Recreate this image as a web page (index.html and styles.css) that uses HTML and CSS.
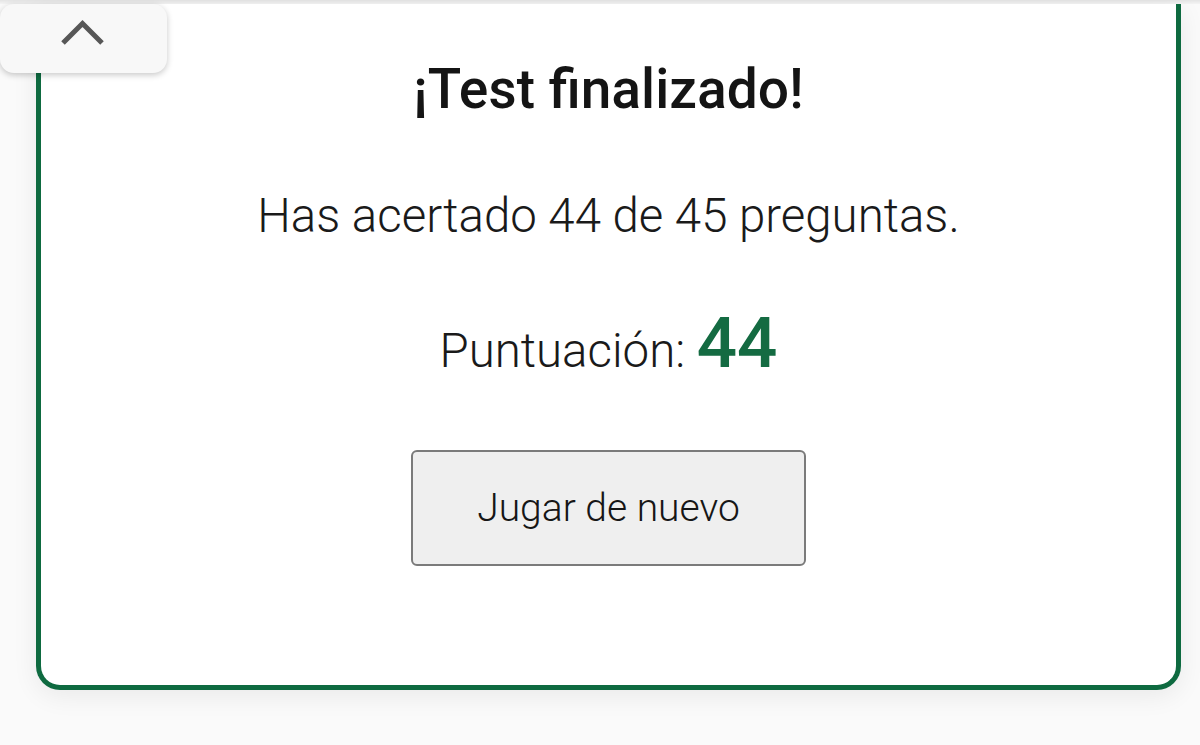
FILE: index.html
```html
<!DOCTYPE html>
<html lang="es">
<head>
<meta charset="utf-8">
<title>Test finalizado</title>
<link rel="stylesheet" href="styles.css">
</head>
<body>
<div class="topbar"></div>
<main class="page">
  <section class="card">
    <h1 class="title">¡Test finalizado!</h1>
    <p class="summary">Has acertado 44 de 45 preguntas.</p>
    <div class="score">
      <span class="score-label">Puntuación:&nbsp;</span>
      <span class="score-value">44</span>
    </div>
    <button class="again" type="button">Jugar de nuevo</button>
  </section>
</main>
<button class="collapse-tab" type="button" aria-label="Contraer">
  <svg width="46" height="28" viewBox="0 0 46 28" class="chevron">
    <polyline points="3,24 22.5,4.5 42,24" fill="none" stroke="#575757" stroke-width="5" stroke-linecap="butt" stroke-linejoin="miter"/>
  </svg>
</button>
</body>
</html>
```

FILE: styles.css
```css
* {
  box-sizing: border-box;
}

html, body {
  margin: 0;
  padding: 0;
}

body {
  background: #fafafa;
  font-family: Roboto, "Liberation Sans", Arial, sans-serif;
  color: #161616;
  width: 1200px;
  height: 745px;
  overflow: hidden;
  position: relative;
}

.topbar {
  height: 4px;
  background: linear-gradient(#e4e4e4, #f4f4f4);
}

.page {
  display: flex;
  padding-left: 36px;
}

.card {
  width: 1145px;
  background: #ffffff;
  border: 5px solid #0e6a40;
  border-top: none;
  border-radius: 0 0 24px 24px;
  box-shadow: 0 6px 26px rgba(0, 0, 0, 0.07);
  display: flex;
  flex-direction: column;
  align-items: center;
  padding: 53px 0 119px;
}

.title {
  margin: 0;
  font-family: "Roboto Medium", Roboto, "Liberation Sans", Arial, sans-serif;
  font-size: 55px;
  line-height: 64px;
  font-weight: 500;
  color: #141414;
}

.summary {
  margin: 67px 0 0;
  font-size: 47.4px;
  line-height: 56px;
  font-weight: 300;
  color: #1a1a1a;
}

.score {
  margin-top: 64px;
  display: flex;
  align-items: baseline;
}

.score-label {
  font-size: 47.4px;
  line-height: 46px;
  font-weight: 300;
  color: #1a1a1a;
}

.score-value {
  font-family: "Roboto Medium", Roboto, "Liberation Sans", Arial, sans-serif;
  font-size: 71px;
  line-height: 70px;
  font-weight: 500;
  color: #146b42;
}

.again {
  margin-top: 72px;
  width: 395px;
  height: 116px;
  background: #efefef;
  border: 2px solid #7b7b7b;
  border-radius: 6px;
  font-family: Roboto, "Liberation Sans", Arial, sans-serif;
  font-size: 39px;
  font-weight: 300;
  color: #161616;
  padding: 0;
}

.collapse-tab {
  position: absolute;
  left: 0;
  top: 4px;
  width: 167px;
  height: 69px;
  background: #f8f8f8;
  border: none;
  border-radius: 14px;
  box-shadow: 0 2px 6px rgba(0, 0, 0, 0.22);
  display: flex;
  align-items: flex-start;
  justify-content: center;
  padding: 15px 0 0 0;
}

.chevron {
  display: block;
  margin-left: -2px;
}
```
